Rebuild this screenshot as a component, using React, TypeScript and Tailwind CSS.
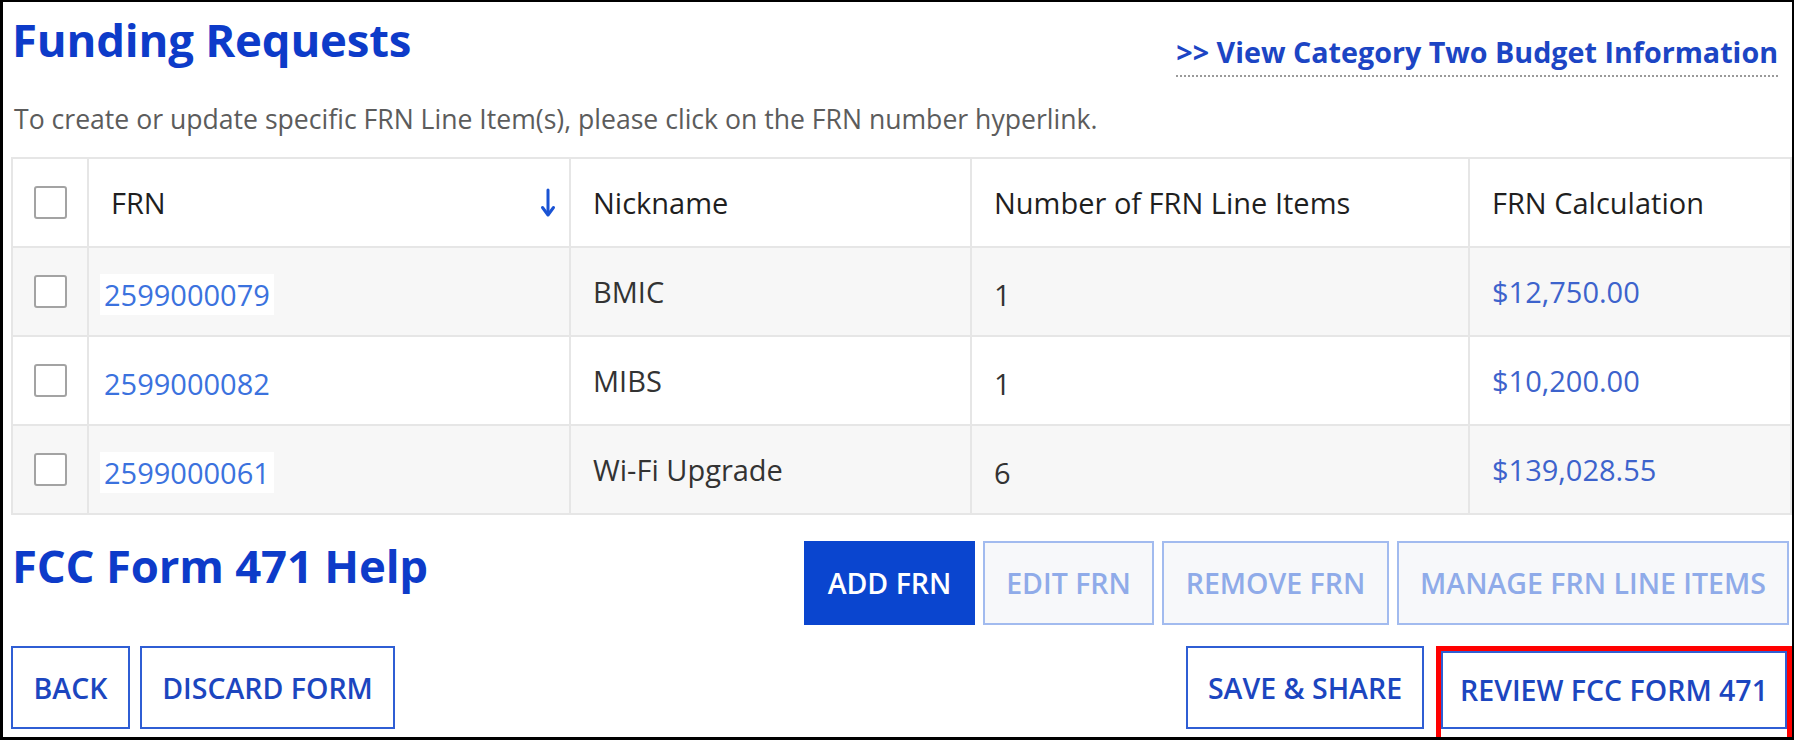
import React from "react";

type Row = {
  frn: string;
  nick: string;
  count: string;
  amount: string;
  shaded: boolean;
};

const rows: Row[] = [
  { frn: "2599000079", nick: "BMIC", count: "1", amount: "$12,750.00", shaded: true },
  { frn: "2599000082", nick: "MIBS", count: "1", amount: "$10,200.00", shaded: false },
  { frn: "2599000061", nick: "Wi-Fi Upgrade", count: "6", amount: "$139,028.55", shaded: true },
];

function Checkbox() {
  return (
    <span className="block w-[33px] h-[33px] rounded-[3px] border-2 border-[#a3a3a3] bg-white" />
  );
}

function SortArrow() {
  return (
    <svg width="16" height="30" viewBox="0 0 16 30" fill="none">
      <path d="M8 2 V26" stroke="#1a53d4" strokeWidth="3" strokeLinecap="round" />
      <path d="M2.5 19.5 L8 27 L13.5 19.5" stroke="#1a53d4" strokeWidth="3" strokeLinecap="round" strokeLinejoin="round" />
    </svg>
  );
}

const cell = "flex items-center border-r-2 border-b-2 border-[#e6e6e6] h-[89px]";

export default function App() {
  return (
    <div className="w-[1794px] h-[740px] overflow-hidden bg-white border-black border-l-[3px] border-t-2 border-r-2 border-b-[3px] font-['Open_Sans',sans-serif] flex flex-col">
      {/* heading row */}
      <div className="flex justify-between items-start">
        <h1 className="ml-[9px] mt-[15px] text-[45.5px] leading-none font-bold text-[#0d3bc9] tracking-[-0.2px]">
          Funding Requests
        </h1>
        <a className="mt-[36px] mr-[14px] pb-[8px] border-b-2 border-dotted border-[#9a9a9a] text-[28.7px] leading-none font-bold text-[#1c45c4]">
          &gt;&gt; View Category Two Budget Information
        </a>
      </div>

      <p className="ml-[11px] mt-[29px] text-[26.6px] leading-none text-[#5c5c5c]">
        To create or update specific FRN Line Item(s), please click on the FRN number hyperlink.
      </p>

      {/* FRN table */}
      <div className="ml-[8px] mt-[25px] border-t-2 border-l-2 border-[#e6e6e6] grid grid-cols-[76px_482px_401px_498px_1fr] text-[29px] leading-none">
        <div className={`${cell} justify-center bg-white`}>
          <Checkbox />
        </div>
        <div className={`${cell} justify-between pl-[22px] pr-[13px] bg-white text-[#1f1f1f]`}>
          <span>FRN</span>
          <SortArrow />
        </div>
        <div className={`${cell} pl-[22px] bg-white text-[#1f1f1f]`}>Nickname</div>
        <div className={`${cell} pl-[22px] bg-white text-[#1f1f1f]`}>Number of FRN Line Items</div>
        <div className={`${cell} pl-[22px] bg-white text-[#1f1f1f]`}>FRN Calculation</div>

        {rows.map((r) => {
          const bg = r.shaded ? "bg-[#f7f7f7]" : "bg-white";
          return (
            <React.Fragment key={r.frn}>
              <div className={`${cell} justify-center ${bg}`}>
                <Checkbox />
              </div>
              <div className={`${cell} pl-[11px] ${bg}`}>
                <span className="bg-white px-[4px] py-[6px] mt-[6px] text-[#3b72de]">{r.frn}</span>
              </div>
              <div className={`${cell} pl-[22px] ${bg} text-[#333]`}>{r.nick}</div>
              <div className={`${cell} pl-[22px] ${bg} text-[#333]`}>
                <span className="mt-[6px]">{r.count}</span>
              </div>
              <div className={`${cell} pl-[22px] ${bg} text-[#3d63cc]`}>{r.amount}</div>
            </React.Fragment>
          );
        })}
      </div>

      {/* help heading and FRN actions */}
      <div className="mt-[26px] flex justify-between items-start">
        <h2 className="ml-[9px] mt-[2px] text-[45.5px] leading-none font-bold text-[#0d3bc9] tracking-[-0.2px]">
          FCC Form 471 Help
        </h2>
        <div className="mr-[3px] flex gap-[8px] text-[28.5px] leading-none font-semibold">
          <button className="w-[171px] h-[84px] bg-[#0a45cf] text-white">ADD FRN</button>
          <button className="w-[171px] h-[84px] bg-[#f7f8fa] border-2 border-[#a2bbef] text-[#8fabe9]">EDIT FRN</button>
          <button className="w-[227px] h-[84px] bg-[#f7f8fa] border-2 border-[#a2bbef] text-[#8fabe9]">REMOVE FRN</button>
          <button className="w-[392px] h-[84px] bg-[#f7f8fa] border-2 border-[#a2bbef] text-[#8fabe9]">MANAGE FRN LINE ITEMS</button>
        </div>
      </div>

      {/* form navigation */}
      <div className="mt-[21px] flex justify-between items-start text-[28.5px] leading-none font-semibold text-[#1c46bf]">
        <div className="ml-[8px] flex gap-[10px]">
          <button className="w-[119px] h-[83px] bg-white border-2 border-[#2f5ed4]">BACK</button>
          <button className="w-[255px] h-[83px] bg-white border-2 border-[#2f5ed4]">DISCARD FORM</button>
        </div>
        <div className="flex items-start">
          <button className="w-[238px] h-[83px] bg-white border-2 border-[#2f5ed4]">SAVE &amp; SHARE</button>
          <div className="ml-[12px] w-[356px] h-[100px] border-[5px] border-[#ff0000]">
            <button className="w-[346px] h-[78px] bg-white border-2 border-[#2f5ed4]">REVIEW FCC FORM 471</button>
          </div>
        </div>
      </div>
    </div>
  );
}
